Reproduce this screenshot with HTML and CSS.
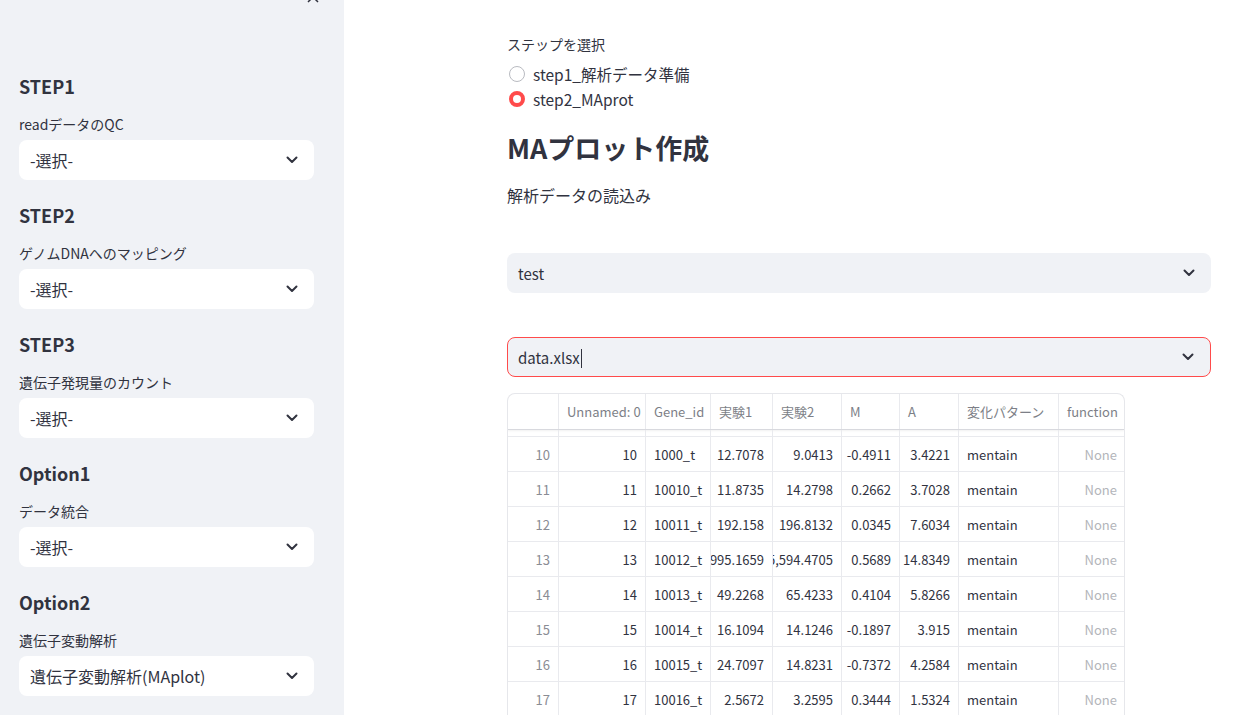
FILE: index.html
```html
<!DOCTYPE html>
<html lang="ja">
<head>
<meta charset="utf-8">
<title>MAプロット作成</title>
<link rel="stylesheet" href="styles.css">
</head>
<body>
<div class="app">
  <aside class="sidebar">
    <svg class="close-icon" width="12" height="12" viewBox="0 0 12 12"><path d="M1 1L11 11M11 1L1 11" stroke="#31333f" stroke-width="1.5" fill="none"/></svg>
    <div class="side-group first">
      <h3 class="side-title">STEP1</h3>
      <div class="side-label">readデータのQC</div>
      <div class="side-select"><span>-選択-</span><svg class="chev" width="12" height="8" viewBox="0 0 12 8"><path d="M1.5 1.5L6 6L10.5 1.5" stroke="#31333f" stroke-width="2" fill="none" stroke-linecap="round" stroke-linejoin="round"/></svg></div>
    </div>
    <div class="side-group">
      <h3 class="side-title">STEP2</h3>
      <div class="side-label">ゲノムDNAへのマッピング</div>
      <div class="side-select"><span>-選択-</span><svg class="chev" width="12" height="8" viewBox="0 0 12 8"><path d="M1.5 1.5L6 6L10.5 1.5" stroke="#31333f" stroke-width="2" fill="none" stroke-linecap="round" stroke-linejoin="round"/></svg></div>
    </div>
    <div class="side-group">
      <h3 class="side-title">STEP3</h3>
      <div class="side-label">遺伝子発現量のカウント</div>
      <div class="side-select"><span>-選択-</span><svg class="chev" width="12" height="8" viewBox="0 0 12 8"><path d="M1.5 1.5L6 6L10.5 1.5" stroke="#31333f" stroke-width="2" fill="none" stroke-linecap="round" stroke-linejoin="round"/></svg></div>
    </div>
    <div class="side-group">
      <h3 class="side-title">Option1</h3>
      <div class="side-label">データ統合</div>
      <div class="side-select"><span>-選択-</span><svg class="chev" width="12" height="8" viewBox="0 0 12 8"><path d="M1.5 1.5L6 6L10.5 1.5" stroke="#31333f" stroke-width="2" fill="none" stroke-linecap="round" stroke-linejoin="round"/></svg></div>
    </div>
    <div class="side-group">
      <h3 class="side-title">Option2</h3>
      <div class="side-label">遺伝子変動解析</div>
      <div class="side-select"><span>遺伝子変動解析(MAplot)</span><svg class="chev" width="12" height="8" viewBox="0 0 12 8"><path d="M1.5 1.5L6 6L10.5 1.5" stroke="#31333f" stroke-width="2" fill="none" stroke-linecap="round" stroke-linejoin="round"/></svg></div>
    </div>
  </aside>

  <main class="main">
    <div class="radio-label">ステップを選択</div>
    <div class="radio-group">
      <div class="radio-row"><span class="radio"></span><span>step1_解析データ準備</span></div>
      <div class="radio-row"><span class="radio checked"></span><span>step2_MAprot</span></div>
    </div>
    <h2 class="title">MAプロット作成</h2>
    <p class="para">解析データの読込み</p>

    <div class="select select-test"><span>test</span><svg class="chev" width="12" height="8" viewBox="0 0 12 8"><path d="M1.5 1.5L6 6L10.5 1.5" stroke="#31333f" stroke-width="2" fill="none" stroke-linecap="round" stroke-linejoin="round"/></svg></div>
    <div class="select select-focus"><span>data.xlsx<span class="caret"></span></span><svg class="chev" width="12" height="8" viewBox="0 0 12 8"><path d="M1.5 1.5L6 6L10.5 1.5" stroke="#31333f" stroke-width="2" fill="none" stroke-linecap="round" stroke-linejoin="round"/></svg></div>

    <div class="table">
      <div class="row head">
        <div class="c"></div>
        <div class="c">Unnamed: 0</div>
        <div class="c">Gene_id</div>
        <div class="c">実験1</div>
        <div class="c">実験2</div>
        <div class="c">M</div>
        <div class="c">A</div>
        <div class="c">変化パターン</div>
        <div class="c">function</div>
      </div>
      <div class="row partial">
        <div class="c"></div><div class="c"></div><div class="c"></div><div class="c"></div><div class="c"></div><div class="c"></div><div class="c"></div><div class="c"></div><div class="c"></div>
      </div>
      <div class="row">
        <div class="c idx">10</div><div class="c num">10</div><div class="c">1000_t</div><div class="c num">12.7078</div><div class="c num">9.0413</div><div class="c num">-0.4911</div><div class="c num">3.4221</div><div class="c">mentain</div><div class="c none">None</div>
      </div>
      <div class="row">
        <div class="c idx">11</div><div class="c num">11</div><div class="c">10010_t</div><div class="c num">11.8735</div><div class="c num">14.2798</div><div class="c num">0.2662</div><div class="c num">3.7028</div><div class="c">mentain</div><div class="c none">None</div>
      </div>
      <div class="row">
        <div class="c idx">12</div><div class="c num">12</div><div class="c">10011_t</div><div class="c num">192.158</div><div class="c num">196.8132</div><div class="c num">0.0345</div><div class="c num">7.6034</div><div class="c">mentain</div><div class="c none">None</div>
      </div>
      <div class="row">
        <div class="c idx">13</div><div class="c num">13</div><div class="c">10012_t</div><div class="c num clip"><span>1,995.1659</span></div><div class="c num clip"><span>15,594.4705</span></div><div class="c num">0.5689</div><div class="c num">14.8349</div><div class="c">mentain</div><div class="c none">None</div>
      </div>
      <div class="row">
        <div class="c idx">14</div><div class="c num">14</div><div class="c">10013_t</div><div class="c num">49.2268</div><div class="c num">65.4233</div><div class="c num">0.4104</div><div class="c num">5.8266</div><div class="c">mentain</div><div class="c none">None</div>
      </div>
      <div class="row">
        <div class="c idx">15</div><div class="c num">15</div><div class="c">10014_t</div><div class="c num">16.1094</div><div class="c num">14.1246</div><div class="c num">-0.1897</div><div class="c num">3.915</div><div class="c">mentain</div><div class="c none">None</div>
      </div>
      <div class="row">
        <div class="c idx">16</div><div class="c num">16</div><div class="c">10015_t</div><div class="c num">24.7097</div><div class="c num">14.8231</div><div class="c num">-0.7372</div><div class="c num">4.2584</div><div class="c">mentain</div><div class="c none">None</div>
      </div>
      <div class="row">
        <div class="c idx">17</div><div class="c num">17</div><div class="c">10016_t</div><div class="c num">2.5672</div><div class="c num">3.2595</div><div class="c num">0.3444</div><div class="c num">1.5324</div><div class="c">mentain</div><div class="c none">None</div>
      </div>
    </div>
  </main>
</div>
</body>
</html>
```
FILE: styles.css
```css
* { box-sizing: border-box; }
html, body {
  margin: 0;
  padding: 0;
  height: 715px;
  overflow: hidden;
}
body {
  font-family: "Noto Sans CJK JP", "Noto Sans", sans-serif;
  color: #31333f;
  background: #ffffff;
}
.app {
  display: flex;
  height: 715px;
}
.sidebar {
  position: relative;
  flex: 0 0 344px;
  background: #f0f2f6;
  padding: 75px 30px 0 19px;
  overflow: hidden;
}
.close-icon {
  position: absolute;
  left: 307px;
  top: -9px;
}
.side-group { margin-top: 24px; }
.side-group.first { margin-top: 0; }
.side-title {
  margin: 0;
  font-size: 18px;
  font-weight: 700;
  line-height: 22px;
}
.side-label {
  margin-top: 17px;
  font-size: 14px;
  line-height: 20px;
}
.side-select {
  margin-top: 6px;
  height: 40px;
  background: #ffffff;
  border-radius: 8px;
  display: flex;
  align-items: center;
  justify-content: space-between;
  padding: 0 16px 0 11px;
  font-size: 16px;
}
.chev { display: block; }

.main {
  flex: 1;
  padding: 34px 34px 0 163px;
  overflow: hidden;
}
.radio-label {
  font-size: 14px;
  line-height: 20px;
}
.radio-group {
  margin-top: 7px;
}
.radio-row {
  display: flex;
  align-items: center;
  height: 26px;
  font-size: 15.5px;
  gap: 8px;
  padding-left: 2px;
}
.radio-row + .radio-row { margin-top: -1px; }
.radio {
  width: 16px;
  height: 16px;
  border-radius: 50%;
  border: 1px solid #b9bbc1;
  background: #fff;
}
.radio.checked {
  border: 4.5px solid #ff4b4b;
  background: #fff;
}
.title {
  margin: 19px 0 0;
  font-size: 27px;
  font-weight: 700;
  line-height: 34px;
}
.para {
  margin: 18px 0 0;
  font-size: 16px;
  line-height: 24px;
}
.select {
  height: 40px;
  background: #f0f2f6;
  border-radius: 8px;
  display: flex;
  align-items: center;
  justify-content: space-between;
  padding: 0 16px 0 11px;
  font-size: 15px;
}
.select-test { margin-top: 46px; }
.select-focus {
  margin-top: 44px;
  border: 1px solid #ff4b4b;
  padding-left: 10px;
}
.caret {
  display: inline-block;
  width: 1px;
  height: 19px;
  background: #31333f;
  vertical-align: -4px;
  margin-left: 1px;
}
.table {
  margin-top: 16px;
  width: 618px;
  border: 1px solid #e6e7eb;
  border-bottom: none;
  border-radius: 8px 8px 0 0;
  overflow: hidden;
  font-size: 13px;
}
.row {
  display: grid;
  grid-template-columns: 51px 87px 65px 62px 69px 58px 59px 100px 66px;
  height: 35px;
  border-bottom: 1px solid #e9eaee;
}
.row.head {
  height: 36px;
  color: #7d7f87;
  border-bottom: 1px solid #d8d9de;
  box-shadow: 0 1px 2px rgba(0,0,0,0.06);
}
.row.partial {
  height: 7px;
}
.c {
  border-right: 1px solid #e9eaee;
  padding: 0 8px;
  display: flex;
  align-items: center;
  white-space: nowrap;
  overflow: hidden;
}
.c:last-child { border-right: none; }
.num, .idx, .none { justify-content: flex-end; }
.clip { padding-left: 0; }
.idx { color: #8a8c94; }
.none { color: #b3b5ba; }
.num span { flex: none; }
```
